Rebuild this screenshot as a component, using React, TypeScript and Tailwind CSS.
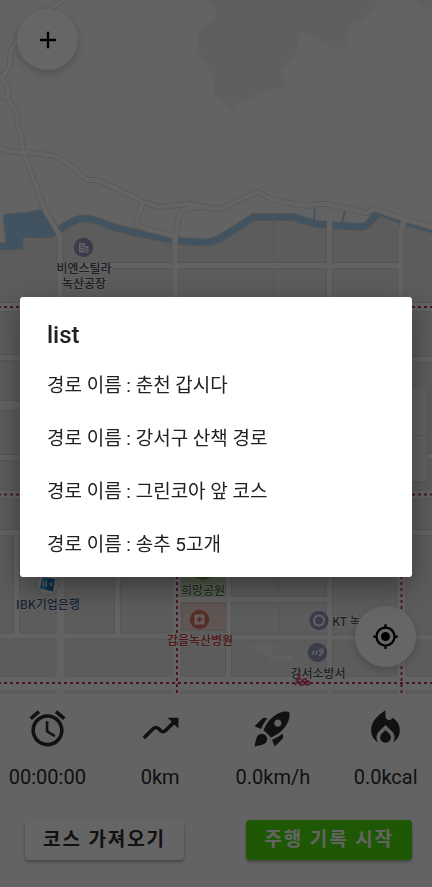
import React from "react";
import {
  MdAdd,
  MdAlarm,
  MdLocalFireDepartment,
  MdMoving,
  MdMyLocation,
  MdRocketLaunch,
} from "react-icons/md";

const courses = ["춘천 갑시다", "강서구 산책 경로", "그린코아 앞 코스", "송추 5고개"];

const stats = [
  { icon: MdAlarm, label: "시간", value: "00:00:00" },
  { icon: MdMoving, label: "거리", value: "0km" },
  { icon: MdRocketLaunch, label: "속도", value: "0.0km/h" },
  { icon: MdLocalFireDepartment, label: "칼로리", value: "0.0kcal" },
];

// Country roads, drawn as curvy lines above the river
const lanes = [
  "M66 -2 46 12 17 41 13 46 10 56 10 65 2 78 9 90 7 98",
  "M-2 73 2 78",
  "M-2 95 7 98 13 106 17 114 17 125 21 135 23 152",
  "M-2 147 10 152 24 152 55 156 70 165 80 174 87 180 98 180 142 201 158 207 190 204 216 209 222 208 257 192 270 198 283 202 308 206 316 204 326 204 345 208 366 213 374 209 404 219 434 228",
  "M143 202 136 222 138 226 150 230 175 236",
  "M205 207 190 208 181 211 178 220 175 240",
  "M24 154 45 210 60 236",
];

// City streets: [path, width]
const streets: [string, number][] = [
  ["M60 236V694", 5],
  ["M175 238V310", 5],
  ["M329.5 220V310", 5],
  ["M404 221 401 231V310", 5],
  ["M60 265.5H401", 5],
  ["M-2 307H434", 8],
  ["M-2 357.5H30M400 359.5H434", 5],
  ["M-2 405.5H30", 9],
  ["M-2 457.5H30M420 456.5H434", 5],
  ["M-2 494.5H434", 8],
  ["M-2 532.5H434", 5],
  ["M16.5 534V636", 5],
  ["M117.5 534V636", 5],
  ["M60.5 534V700", 8],
  ["M176.5 534V700", 8],
  ["M228.5 534V686", 5],
  ["M329.5 534V700", 5],
  ["M401.5 534V700", 8],
  ["M-2 636H176", 5],
  ["M176 599.5H330", 5],
  ["M176 637.5H434", 4],
  ["M-2 683.5H434", 14],
];

const transit = [
  "M-2 307H434",
  "M-2 494.5H434",
  "M-2 683H434",
  "M177 534V696",
  "M401.5 534V696",
];

const river =
  "M56 232 70 223C80 217 90 217 105 224 130 234 160 237 180 241 208 243 212 243 219 239L254 217H293C305 220 310 224 325 225L362 227Q367 226 369 223L376 215Q380 212 388 215L402 221 434 230";

function MapView() {
  return (
    <svg
      className="absolute inset-0 size-full"
      viewBox="0 0 432 694"
      preserveAspectRatio="xMidYMid slice"
      role="img"
      aria-label="지도"
    >
      <rect x="-400" width="1232" height="694" fill="#f8f8f8" />
      <path
        d="M423 0H416Q426 14 434 4V0ZM207 0Q216 7 216 15C212 22 206 26 200 31Q195 44 198 51C204 62 211 68 213 79V92L216 96 232 110Q235 104 241 102 249 101 261 91 268 90 283 88 287 86 285 79 278 70 281 68L293 58Q297 54 299 36 301 32 305 33L325 42Q330 45 334 49 344 51 347 40 347 28 352 25 362 20 374 9L378 0Z"
        fill="#edede8"
      />
      <path
        d="M-2 250H23V240L60 236 70 223 86 218 105 224 160 238 208 242 254 217H293L325 225 362 227 376 215 402 221 434 230V696H-2Z"
        fill="#e6e6e6"
      />
      <path
        d="M3 217Q3 214 7 214L28 212 44 209 58 234Q54 239 40 238H23V250H-2V243L6 242Z"
        fill="#a2d0f0"
        stroke="#d2d8d8"
        strokeWidth="1"
      />
      <g fill="none">
        <path d={river} stroke="#cdd3d3" strokeWidth="8" />
        <path d={river} stroke="#a2d0f0" strokeWidth="6" />
        <path d="M315 208 314 220M345 211 342 223" stroke="#a2d0f0" strokeWidth="2" />
        <path d="M273.5 213V300M279 577V634" stroke="#d8d8d8" strokeWidth="1" />
        {lanes.map((d) => (
          <path key={d} d={d} stroke="#dedede" strokeWidth="6" strokeLinejoin="round" />
        ))}
        {streets.map(([d, w]) => (
          <path key={d} d={d} stroke="#d8d8d8" strokeWidth={w + 2} />
        ))}
        {lanes.map((d) => (
          <path key={d} d={d} stroke="#fbfbfb" strokeWidth="4" strokeLinejoin="round" />
        ))}
        {streets.map(([d, w]) => (
          <path key={d} d={d} stroke="#f8f8f8" strokeWidth={w} />
        ))}
      </g>
      <rect x="181" y="560" width="45" height="37" fill="#c5d8b4" />
      <rect x="182" y="603" width="44" height="27" fill="#eed6d2" stroke="#dcc2be" />
      <path
        d="M253 645H275V651H271V656H292V661H270V656H264V651H253Z"
        fill="#f0f0f0"
      />
      <g fill="none" stroke="#b83860" strokeWidth="2" strokeDasharray="3 3">
        {transit.map((d) => (
          <path key={d} d={d} />
        ))}
      </g>

      {/* Map controls */}
      <rect x="390" y="389" width="37.5" height="94" rx="2" fill="#c8c8c8" />
      <rect x="390" y="389" width="37" height="93" rx="2" fill="#f4f4f4" />
      <path d="M390 435.5H427" stroke="#d8d8d8" />

      {/* Factory */}
      <circle cx="83.5" cy="247.5" r="9.7" fill="#9494bc" />
      <path d="M79 243H85V246H88.5V252.5H79Z" fill="#f4f4fa" />
      <path
        d="M80.5 245H83.5M80.5 247.5H83.5M80.5 250H83.5M86 248.5H87.5M86 250.5H87.5M85 246V252.5"
        stroke="#9494bc"
        strokeWidth="1"
      />

      {/* Bank */}
      <circle cx="47.5" cy="584" r="11" fill="#fafafa" stroke="#d0d0d0" strokeWidth="1" />
      <path d="M43 577.5 55 579 53 591.5 40 588Z" fill="#1e6fb4" />
      <path d="M43 577.5 48 578 46 589.5 40 588Z" fill="#36b4dd" />
      <path
        d="M43.5 582V586M45 582H47L46 584 47 586H45M49 583 53 586M52.5 582 50 586"
        fill="none"
        stroke="#ffffff"
        strokeWidth="1"
      />

      {/* Park */}
      <circle cx="203" cy="570.5" r="9.7" fill="#5fae3c" />

      {/* Hospital */}
      <circle cx="199.5" cy="619.5" r="9.7" fill="#d87464" />
      <rect x="194.5" y="614.5" width="10" height="10" rx="1.5" fill="#fbeeec" />
      <path d="M199.5 616.5V622.5M196.5 619.5H202.5" stroke="#d87464" strokeWidth="2" />

      {/* Telecom office */}
      <circle cx="319" cy="620.5" r="9.7" fill="#9496ba" />
      <circle cx="319" cy="620.5" r="5" fill="none" stroke="#f2f2f8" strokeWidth="2" />

      {/* Fire station */}
      <circle cx="317.5" cy="652.5" r="9.7" fill="#9496ba" />
      <path
        d="M312 655 314 650.5M315.5 655 317.5 650.5M318.5 655.5Q322.5 655 323 650.5"
        fill="none"
        stroke="#f4f4fa"
        strokeWidth="1.7"
      />
      <circle cx="321.3" cy="650.8" r="1.5" fill="none" stroke="#f4f4fa" strokeWidth="1.5" />

      <g
        className="font-['Noto_Sans_CJK_KR',sans-serif] text-[12px] font-medium"
        textAnchor="middle"
        stroke="#f4f4f4"
        strokeWidth="2"
        strokeLinejoin="round"
        paintOrder="stroke"
      >
        <text y="273" fill="#4c4c56">
          <tspan x="84">비엔스틸라</tspan>
          <tspan x="84" dy="15">녹산공장</tspan>
        </text>
        <text x="48" y="609" fill="#3a5a80">IBK기업은행</text>
        <text x="203" y="595" fill="#3f7a2c">희망공원</text>
        <text x="200" y="645" fill="#cc3a3a">갑을녹산병원</text>
        <text x="332" y="626" fill="#54566a" textAnchor="start">KT 녹산</text>
        <text x="318" y="678" fill="#54566a">강서소방서</text>
      </g>

      {/* Walking and cycling marker */}
      <g fill="none" stroke="#c83c66" strokeWidth="1.3">
        <circle cx="299" cy="675" r="1" fill="#c83c66" />
        <path d="M299 677 298 681 300 683 300 686M298 681 295 685M299 678 302 680M297 678 296 681" />
        <circle cx="302.5" cy="683" r="2" />
        <circle cx="307.5" cy="683" r="2" />
        <path d="M302.5 683 304 679H306L307.5 683" />
      </g>
    </svg>
  );
}

export default function App() {
  return (
    <div className="relative flex min-h-screen flex-col bg-[#f8f8f8] font-[Roboto,'Noto_Sans_CJK_KR',sans-serif]">
      <main className="relative flex-1 overflow-hidden">
        <MapView />
        <button
          type="button"
          aria-label="추가"
          className="absolute left-[17px] top-[9px] flex size-[61px] items-center justify-center rounded-full bg-white text-black shadow-[0_3px_8px_rgba(0,0,0,0.2)]"
        >
          <MdAdd size={28} />
        </button>
        <button
          type="button"
          aria-label="현재 위치"
          className="absolute bottom-[27px] right-4 flex size-[61px] items-center justify-center rounded-full bg-white text-black shadow-[0_3px_8px_rgba(0,0,0,0.2)]"
        >
          <MdMyLocation size={27} />
        </button>
      </main>

      <footer className="pb-[27px] pt-[13px]">
        <ul className="grid grid-cols-4 gap-x-5 pl-px text-[#2c2c2c]">
          {stats.map(({ icon: Icon, label, value }) => (
            <li key={label} aria-label={label} className="flex flex-col items-center">
              <Icon size={43} />
              <span className="mt-[13px] whitespace-nowrap text-[20px] leading-7">{value}</span>
            </li>
          ))}
        </ul>
        <div className="mt-[29px] flex justify-between pl-[25px] pr-5 text-[19px] font-bold tracking-widest">
          <button
            type="button"
            className="h-10 rounded bg-[#fcfcfc] px-[18px] text-[#2c2c2c] shadow-[0_2px_3px_rgba(0,0,0,0.3)]"
          >
            코스 가져오기
          </button>
          <button
            type="button"
            className="h-10 rounded bg-[#4cdc0c] px-[18px] text-[#f8f8f8] shadow-[0_2px_3px_rgba(0,0,0,0.3)]"
          >
            주행 기록 시작
          </button>
        </div>
      </footer>

      <div className="fixed inset-0 flex items-center bg-black/60 px-5 pb-[14px]">
        <section
          role="dialog"
          aria-modal="true"
          aria-labelledby="course-title"
          className="w-full rounded-[3px] bg-white pb-[5px] text-[#212121] shadow-[0_10px_30px_rgba(0,0,0,0.4)]"
        >
          <h2 id="course-title" className="px-[27px] pb-[9px] pt-[22px] text-[24px] font-medium leading-8">
            list
          </h2>
          <ul>
            {courses.map((name) => (
              <li key={name}>
                <button type="button" className="h-[53px] w-full px-[27px] text-left text-[19px]">
                  경로 이름 : {name}
                </button>
              </li>
            ))}
          </ul>
        </section>
      </div>
    </div>
  );
}
